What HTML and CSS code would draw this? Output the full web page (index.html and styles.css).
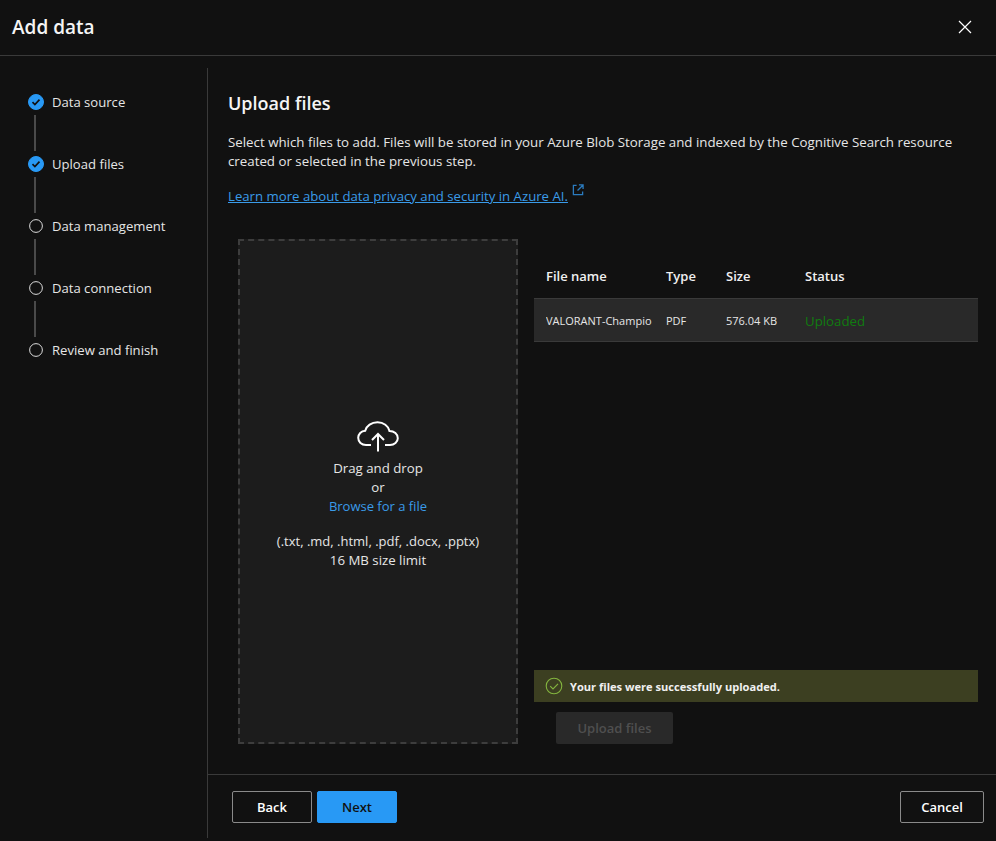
FILE: index.html
```html
<!DOCTYPE html>
<html lang="en">
<head>
  <meta charset="UTF-8">
  <meta name="viewport" content="width=device-width, initial-scale=1.0">
  <title>Add data</title>
  <link rel="stylesheet" href="styles.css">
</head>
<body>

  <header class="top-bar">
    <h1>Add data</h1>
    <svg class="close-icon" width="14" height="14" viewBox="0 0 14 14"><path d="M1 1l12 12M13 1L1 13" stroke="#fff" stroke-width="1.2" fill="none"/></svg>
  </header>

  <div class="dialog-body">
    <nav class="steps">
      <div class="step">
        <span class="dot done"><svg width="10" height="10" viewBox="0 0 10 10"><path d="M1.5 5.2l2.4 2.3 4.6-4.8" stroke="#111" stroke-width="1.7" fill="none"/></svg></span>
        <span>Data source</span>
      </div>
      <div class="step">
        <span class="dot done"><svg width="10" height="10" viewBox="0 0 10 10"><path d="M1.5 5.2l2.4 2.3 4.6-4.8" stroke="#111" stroke-width="1.7" fill="none"/></svg></span>
        <span>Upload files</span>
      </div>
      <div class="step"><span class="dot"></span><span>Data management</span></div>
      <div class="step"><span class="dot"></span><span>Data connection</span></div>
      <div class="step last"><span class="dot"></span><span>Review and finish</span></div>
    </nav>

    <div class="main">
      <section class="content">
        <h2>Upload files</h2>
        <p class="intro">Select which files to add. Files will be stored in your Azure Blob Storage and indexed by the Cognitive Search resource created or selected in the previous step.</p>
        <p class="learn">
          <a href="#">Learn more about data privacy and security in Azure AI.</a>
          <svg class="ext-icon" width="12" height="12" viewBox="0 0 13 13"><path d="M5 1.5H1.5v10h10V8M7.5 1H12v4.5M12 1L6 7" stroke="#2b7cc0" stroke-width="1.4" fill="none"/></svg>
        </p>

        <div class="upload-area">
          <div class="drop-zone">
            <svg width="42" height="31" viewBox="0 0 42 31"><path d="M14 24H9C4.500 24 1.200 20.800 1.200 16.800C1.200 13 4.200 10 8.200 9.700C9.500 4.800 14.500 1.200 20.500 1.200C26.500 1.200 31.500 5 32.500 10C37.200 10 40.800 13.200 40.800 17.200C40.800 21 37.300 24 33 24H28" stroke="#fff" stroke-width="2" fill="none"/><path d="M21 30.500V13M15 19L21 13 27 19" stroke="#fff" stroke-width="2" fill="none"/></svg>
            <div class="drop-line first">Drag and drop</div>
            <div class="drop-line">or</div>
            <a class="drop-line browse" href="#">Browse for a file</a>
            <div class="drop-line types">(.txt, .md, .html, .pdf, .docx, .pptx)</div>
            <div class="drop-line">16 MB size limit</div>
          </div>

          <div class="files">
            <div class="file-row head">
              <span class="col-name">File name</span>
              <span class="col-type">Type</span>
              <span class="col-size">Size</span>
              <span>Status</span>
            </div>
            <div class="file-row item">
              <span class="col-name clip">VALORANT-Champio</span>
              <span class="col-type">PDF</span>
              <span class="col-size">576.04 KB</span>
              <span class="uploaded">Uploaded</span>
            </div>
            <div class="notice">
              <svg width="18" height="18" viewBox="0 0 18 18"><circle cx="9" cy="9" r="7.800" stroke="#84b53f" stroke-width="1.100" fill="none"/><path d="M5.200 9.200l2.800 2.800 5-5.200" stroke="#84b53f" stroke-width="1.100" fill="none"/></svg>
              <span>Your files were successfully uploaded.</span>
            </div>
            <button class="btn-upload" disabled>Upload files</button>
          </div>
        </div>
      </section>

      <footer class="actions">
        <button class="btn">Back</button>
        <button class="btn primary">Next</button>
        <button class="btn cancel">Cancel</button>
      </footer>
    </div>
  </div>

</body>
</html>
```

FILE: styles.css
```css
body {
  font-family: "Open Sans", "Noto Sans", Arial, sans-serif;
  font-size: 13.25px;
  background-color: #111;
  color: #e6e6e6;
  margin: 0;
  height: 841px;
  overflow: hidden;
}
h1, h2, p {
  margin: 0;
}
a {
  color: #3a9be8;
}
.top-bar {
  height: 55px;
  border-bottom: 1px solid #3a3a3a;
  display: flex;
  align-items: center;
  justify-content: space-between;
  padding: 0 24px 0 12px;
}
.top-bar h1 {
  font-size: 19px;
  font-weight: 600;
  color: #f5f5f5;
  margin-bottom: 2px;
}
.close-icon {
  margin-bottom: 1px;
}
.dialog-body {
  display: flex;
  height: 770px;
  margin-top: 12px;
}
.steps {
  flex: none;
  width: 208px;
  border-right: 1px solid #3a3a3a;
  padding: 26px 0 0 28px;
  box-sizing: border-box;
  font-size: 13.1px;
}
.step {
  height: 62px;
  display: flex;
  gap: 8px;
  position: relative;
  line-height: 16px;
}
.step::after {
  content: "";
  position: absolute;
  left: 6px;
  top: 21px;
  width: 2px;
  height: 36px;
  background-color: #4a4a4a;
}
.step.last::after {
  display: none;
}
.dot {
  width: 16px;
  height: 16px;
  box-sizing: border-box;
  border: 1.500px solid #fff;
  border-radius: 50%;
  transform: scale(.85);
  display: flex;
  align-items: center;
  justify-content: center;
}
.dot.done {
  background-color: #2899f5;
  border-color: #2899f5;
  transform: none;
}
.main {
  flex: 1;
  display: flex;
  flex-direction: column;
  min-width: 0;
}
.content {
  height: 707px;
  padding: 23px 18px 0 20px;
  box-sizing: border-box;
  border-bottom: 1px solid #3a3a3a;
}
.content h2 {
  font-size: 18px;
  font-weight: 600;
  line-height: 24px;
  color: #f5f5f5;
}
.intro {
  margin-top: 18px;
  line-height: 19px;
  font-size: 13.3px;
}
.learn {
  margin-top: 13px;
  line-height: 19px;
  height: 19px;
  font-size: 13.2px;
}
.ext-icon {
  vertical-align: 5px;
  margin-left: 1px;
}
.upload-area {
  display: flex;
  gap: 16px;
  margin-top: 36px;
  margin-left: 10px;
  height: 505px;
}
.drop-zone {
  width: 280px;
  flex: none;
  box-sizing: border-box;
  background-color: #1c1c1c;
  border: 2px dashed #3d3d3d;
  display: flex;
  flex-direction: column;
  align-items: center;
  justify-content: center;
  padding-top: 7px;
  line-height: 19px;
}
.drop-line.first {
  margin-top: 7px;
}
.browse {
  text-decoration: none;
  font-size: 13px;
}
.drop-line.types {
  margin-top: 16px;
  font-size: 13px;
}
.files {
  flex: 1;
  min-width: 0;
  display: flex;
  flex-direction: column;
}
.file-row {
  display: flex;
  align-items: center;
  padding-left: 12px;
}
.file-row.head {
  height: 59px;
  padding-top: 15px;
  box-sizing: border-box;
  font-size: 13px;
  font-weight: 600;
  color: #f0f0f0;
}
.file-row.item {
  height: 44px;
  box-sizing: border-box;
  background-color: #292929;
  border-top: 1px solid #3a3a3a;
  border-bottom: 1px solid #3a3a3a;
  padding-top: 1px;
  font-size: 11px;
}
.col-name {
  width: 120px;
  flex: none;
}
.clip {
  width: 108px;
  margin-right: 12px;
  overflow: hidden;
  white-space: nowrap;
}
.col-type {
  width: 60px;
  flex: none;
}
.col-size {
  width: 79px;
  flex: none;
}
.uploaded {
  font-size: 13.25px;
  color: #107c10;
}
.notice {
  margin-top: auto;
  height: 32px;
  background-color: #3c3f21;
  display: flex;
  align-items: center;
  gap: 7px;
  padding-left: 11px;
  font-size: 11.1px;
  font-weight: 700;
  color: #f0f0f0;
}
.btn-upload {
  margin: 10px 0 0 22px;
  width: 117px;
  height: 32px;
  border: none;
  border-radius: 2px;
  background-color: #292929;
  color: #4f4f4f;
  font: 600 13px "Open Sans", "Noto Sans", Arial, sans-serif;
}
.actions {
  display: flex;
  gap: 5px;
  padding: 16px 12px 0 24px;
}
.btn {
  width: 80px;
  height: 32px;
  box-sizing: border-box;
  background-color: #111;
  border: 1px solid #8a8a8a;
  border-radius: 2px;
  color: #fff;
  font: 600 13px "Open Sans", "Noto Sans", Arial, sans-serif;
}
.btn.primary {
  background-color: #2899f5;
  border-color: #2899f5;
  color: #111;
}
.btn.cancel {
  margin-left: auto;
  width: 84px;
}
```
